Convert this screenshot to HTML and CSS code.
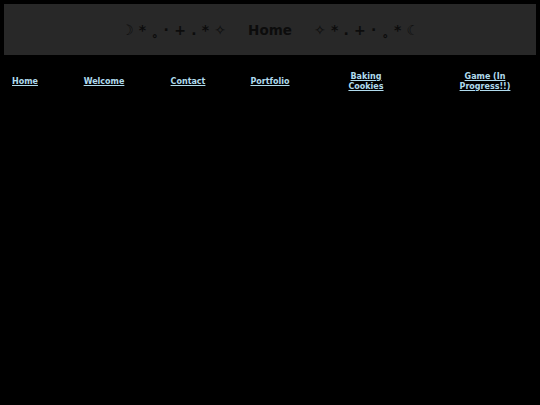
FILE: index.html
```html
<!DOCTYPE html>
<html>
<head>
<meta charset="utf-8">
<link rel="stylesheet" href="styles.css">
</head>
<body>
<header class="banner">
  <h1 class="title">
    <span class="stars">☽ * ˳ · + . * ✧</span>
    <span class="word">Home</span>
    <span class="stars">✧ * . + · ˳ * ☾</span>
  </h1>
</header>
<nav class="nav">
  <div class="cell first"><a href="#">Home</a></div>
  <div class="cell"><a href="#">Welcome</a></div>
  <div class="cell"><a href="#">Contact</a></div>
  <div class="cell"><a href="#">Portfolio</a></div>
  <div class="cell"><a href="#" class="wrap w-baking">Baking Cookies</a></div>
  <div class="cell"><a href="#" class="wrap w-game">Game (In Progress!!)</a></div>
</nav>
</body>
</html>
```
FILE: styles.css
```css
html, body {
  background: #000;
}
body {
  margin: 4px;
  font-family: "DejaVu Sans", Verdana, sans-serif;
}
.banner {
  height: 51px;
  background: #282828;
  display: flex;
  align-items: center;
  justify-content: center;
}
.title {
  margin: 0;
  display: flex;
  align-items: center;
  gap: 22px;
  font-size: 13.5px;
  font-weight: bold;
  color: #0c0c0c;
  white-space: pre;
}
.stars {
  word-spacing: 0.4px;
  font-size: 14px;
}
.nav {
  display: grid;
  grid-template-columns: 71px 58px 110px 54px 138px 100px;
  align-items: center;
  height: 54px;
  font-size: 8px;
  font-weight: bold;
  line-height: 10px;
}
.cell {
  text-align: center;
}
.cell.first {
  text-align: left;
  padding-left: 8px;
}
.nav a {
  color: #b0dbed;
  text-decoration: underline;
}
.wrap {
  display: inline-block;
}
.w-baking {
  width: 36px;
}
.w-game {
  width: 52px;
}
```
